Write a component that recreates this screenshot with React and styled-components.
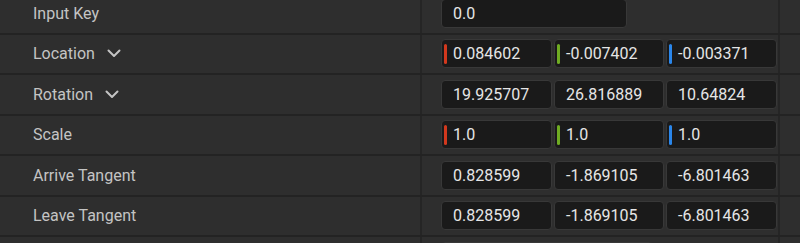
import React from "react";
import styled, { createGlobalStyle } from "styled-components";

const Global = createGlobalStyle`
  html, body {
    margin: 0;
    padding: 0;
    background: #2e2e2e;
    overflow: hidden;
  }
  body {
    font-family: Roboto, "Liberation Sans", sans-serif;
  }
`;

const Panel = styled.div`
  margin-top: -6px;
  display: flex;
  flex-direction: column;
  width: 800px;
`;

const Row = styled.div`
  display: grid;
  grid-template-columns: 422px 358px 1fr;
  height: 38.5px;
  border-bottom: 2px solid #232323;
`;

const NameCell = styled.div`
  display: flex;
  align-items: center;
  gap: 12px;
  padding-left: 33px;
  border-right: 2px solid #252525;
  color: #c4c4c4;
  font-size: 16px;
  white-space: nowrap;
`;

const ValueCell = styled.div`
  display: flex;
  align-items: center;
  gap: 2px;
  padding-left: 19px;
  border-right: 2px solid #252525;
`;

const Filler = styled.div``;

const Field = styled.div`
  box-sizing: border-box;
  display: flex;
  align-items: center;
  width: ${(p) => p.$w}px;
  height: 29px;
  padding-left: ${(p) => (p.$axis ? 2 : 11)}px;
  background: #1a1a1a;
  border: 1px solid #383838;
  border-radius: 4px;
  color: #e6e6e6;
  font-size: 16px;
  white-space: nowrap;
  overflow: hidden;
`;

const AxisBar = styled.span`
  width: 3px;
  height: 20px;
  border-radius: 2px;
  margin-right: 6px;
  background: ${(p) => p.$color};
  flex: none;
`;

const Chevron = () => (
  <svg width="14" height="9" viewBox="0 0 14 9">
    <polyline
      points="1.5,1.5 7,7 12.5,1.5"
      fill="none"
      stroke="#c4c4c4"
      strokeWidth="2"
      strokeLinecap="round"
      strokeLinejoin="round"
    />
  </svg>
);

const AXIS = ["#d2381d", "#6fac22", "#2a86ea"];

const rows = [
  { label: "Input Key", single: "0.0", w: 186 },
  { label: "Location", chevron: true, axis: true, values: ["0.084602", "-0.007402", "-0.003371"] },
  { label: "Rotation", chevron: true, values: ["19.925707", "26.816889", "10.64824"] },
  { label: "Scale", axis: true, values: ["1.0", "1.0", "1.0"] },
  { label: "Arrive Tangent", values: ["0.828599", "-1.869105", "-6.801463"] },
  { label: "Leave Tangent", values: ["0.828599", "-1.869105", "-6.801463"] },
  { label: "", single: "", w: 212 },
];

const widths = [111, 110, 111];

export default function App() {
  return (
    <>
      <Global />
      <Panel>
        {rows.map((r, i) => (
          <Row key={i}>
            <NameCell>
              {r.label}
              {r.chevron && <Chevron />}
            </NameCell>
            <ValueCell>
              {r.values ? (
                r.values.map((v, j) => (
                  <Field key={j} $w={widths[j]} $axis={r.axis}>
                    {r.axis && <AxisBar $color={AXIS[j]} />}
                    {v}
                  </Field>
                ))
              ) : (
                <Field $w={r.w}>{r.single}</Field>
              )}
            </ValueCell>
            <Filler />
          </Row>
        ))}
      </Panel>
    </>
  );
}
